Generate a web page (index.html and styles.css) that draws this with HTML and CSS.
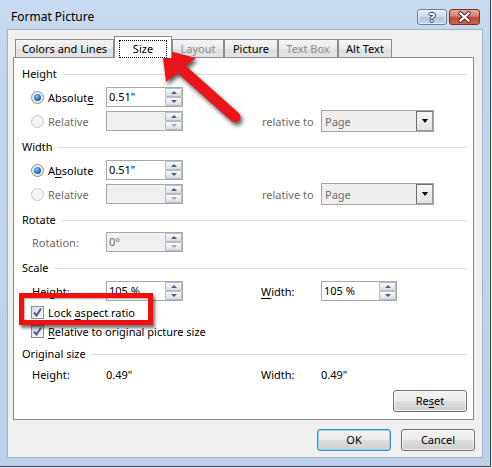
FILE: index.html
```html
<!DOCTYPE html>
<html>
<head>
<meta charset="utf-8">
<link rel="stylesheet" href="styles.css">
</head>
<body>
<div class="window">
  <div class="titlebar">
    <span class="title">Format Picture</span>
    <div class="caption-btns">
      <div class="cbtn help"><span>?</span></div>
      <div class="cbtn close">
        <svg width="31" height="16" viewBox="0 0 31 16"><path d="M11 4 L20 12 M20 4 L11 12" stroke="#3a2a2a" stroke-width="4.4" stroke-linecap="round"/><path d="M11 4 L20 12 M20 4 L11 12" stroke="#fff" stroke-width="2.4" stroke-linecap="round"/></svg>
      </div>
    </div>
  </div>
  <div class="client">
    <div class="tabs">
      <div class="tab w1">Colors and Lines</div>
      <div class="tab sel w2"><span class="focus">Size</span></div>
      <div class="tab dis w3">Layout</div>
      <div class="tab w4">Picture</div>
      <div class="tab dis w5">Text Box</div>
      <div class="tab w6">Alt Text</div>
    </div>
    <div class="panel">
      <div class="hdr first"><span>Height</span><i></i></div>
      <div class="row r1">
        <div class="lab"><span class="radio on"></span><span>Absolut<u>e</u></span></div>
        <div class="inp"><span class="val">0.51"</span><span class="spin"><b class="up"></b><b class="dn"></b></span></div>
      </div>
      <div class="row">
        <div class="lab gray"><span class="radio off"></span><span>Relative</span></div>
        <div class="inp off"><span class="val"></span><span class="spin"><b class="up"></b><b class="dn off"></b></span></div>
        <div class="lab2 gray">relative to</div>
        <div class="sel-box"><span>Page</span><span class="dd"><em></em></span></div>
      </div>

      <div class="hdr"><span>Width</span><i></i></div>
      <div class="row r1">
        <div class="lab"><span class="radio on"></span><span>A<u>b</u>solute</span></div>
        <div class="inp"><span class="val">0.51"</span><span class="spin"><b class="up"></b><b class="dn"></b></span></div>
      </div>
      <div class="row">
        <div class="lab gray"><span class="radio off"></span><span>Relative</span></div>
        <div class="inp off"><span class="val"></span><span class="spin"><b class="up"></b><b class="dn off"></b></span></div>
        <div class="lab2 gray">relative to</div>
        <div class="sel-box"><span>Page</span><span class="dd"><em></em></span></div>
      </div>

      <div class="hdr"><span>Rotate</span><i></i></div>
      <div class="row r2">
        <div class="lab gray txt">Rotation:</div>
        <div class="inp off"><span class="val gray">0°</span><span class="spin"><b class="up"></b><b class="dn off"></b></span></div>
      </div>

      <div class="hdr"><span>Scale</span><i></i></div>
      <div class="row r1">
        <div class="lab txt">Height:</div>
        <div class="inp"><span class="val">105 %</span><span class="spin"><b class="up"></b><b class="dn"></b></span></div>
        <div class="lab2 txt2"><u>W</u>idth:</div>
        <div class="inp w76"><span class="val">105 %</span><span class="spin"><b class="up"></b><b class="dn"></b></span></div>
      </div>
      <div class="crow">
        <span class="chk"><svg width="11" height="11" viewBox="0 0 11 11"><path d="M2 5.5 L4.5 8.5 L9 1.5" fill="none" stroke="#4a5f9c" stroke-width="2"/></svg></span>
        <span>Lock <u>a</u>spect ratio</span>
      </div>
      <div class="crow">
        <span class="chk"><svg width="11" height="11" viewBox="0 0 11 11"><path d="M2 5.5 L4.5 8.5 L9 1.5" fill="none" stroke="#4a5f9c" stroke-width="2"/></svg></span>
        <span><u>R</u>elative to original picture size</span>
      </div>

      <div class="hdr h5"><span>Original size</span><i></i></div>
      <div class="row vrow">
        <div class="lab txt">Height:</div>
        <div class="value">0.49"</div>
        <div class="lab2 txt2">Width:</div>
        <div class="value">0.49"</div>
      </div>
      <div class="reset-row"><button class="btn">Re<u>s</u>et</button></div>
    </div>
    <div class="footer">
      <button class="btn default">OK</button>
      <button class="btn">Cancel</button>
    </div>
  </div>
  <div class="callout"></div>
  <svg class="arrow" width="110" height="100" viewBox="150 40 110 100">
    <g class="arrow-g">
      <line x1="180" y1="68" x2="235" y2="117" stroke="#e8161b" stroke-width="11" stroke-linecap="round"/>
      <polygon points="162,49 166,82 196,58" fill="#e8161b"/>
    </g>
  </svg>
</div>
</body>
</html>
```
FILE: styles.css
```css
* { box-sizing: border-box; }
html, body { margin: 0; padding: 0; }
body {
  width: 492px; height: 468px; overflow: hidden;
  background: #f2f2f2;
  font-family: "Noto Sans", "Open Sans", sans-serif;
  font-size: 11px; color: #000;
}
u { text-decoration: underline; text-underline-offset: 2px; }

.window {
  position: relative;
  width: 491px; height: 467px;
  background: linear-gradient(180deg, #c9dbef 0, #c1d5eb 60px, #bdd2ea 100%);
  border-right: 1px solid #3b4651;
  border-bottom: 1px solid #3b4651;
  padding: 0 7px 0 7px;
}
.titlebar { height: 29px; display: flex; align-items: flex-start; }
.title { margin: 9px 0 0 4px; line-height: 16px; font-size: 12px; }
.caption-btns { margin: 9px 3px 0 auto; display: flex; gap: 2px; }
.cbtn {
  height: 16px; border-radius: 3px;
  display: flex; align-items: center; justify-content: center;
}
.help {
  width: 30px; border: 1px solid #6d7f96;
  background: linear-gradient(180deg, #e4ecf6 0, #cfdcec 50%, #b7c9df 51%, #c6d6ea 100%);
  box-shadow: inset 0 0 0 1px rgba(255,255,255,.5);
}
.help span {
  color: #fff; font-weight: bold; font-size: 13px; line-height: 14px;
  text-shadow: 0 0 1px #2e3f57, 1px 0 0 #2e3f57, -1px 0 0 #2e3f57, 0 1px 0 #2e3f57, 0 -1px 0 #2e3f57;
}
.close {
  width: 31px; border: 1px solid #7a3026;
  background: linear-gradient(180deg, #e9a99d 0, #d7806f 45%, #c34a36 50%, #d0614a 100%);
}
.close svg { display: block; }

.client {
  height: 429px;
  background: #f0f0f0;
  border: 1px solid #9fb2c8;
  display: flex; flex-direction: column;
}
.tabs { height: 27px; display: flex; align-items: flex-end; padding-left: 7px; }
.tab {
  height: 18px; border: 1px solid #898c95; border-bottom: none;
  background: linear-gradient(180deg, #f5f5f5 0, #ebebeb 50%, #dedede 51%, #e3e3e3 100%);
  display: flex; align-items: center; justify-content: center;
  line-height: 14px; white-space: nowrap; padding-top: 1px;
}
.tab.dis { color: #8d8d8d; }
.tab.sel {
  height: 22px; margin-bottom: -1px; background: #fff;
  position: relative; z-index: 1; align-items: flex-start; padding-top: 4px;
}
.focus { outline: 1px dotted #000; padding: 1px 13px 2px; line-height: 13px; }
.w1 { width: 99px; } .w2 { width: 58px; } .w3 { width: 52px; }
.w4 { width: 54px; } .w5 { width: 60px; } .w6 { width: 54px; }

.panel {
  margin: 0 8px 0 5px; height: 363px;
  background: #fff; border: 1px solid #898c95;
  padding: 8px 6px 7px 8px;
  display: flex; flex-direction: column;
}
.hdr { height: 16px; display: flex; align-items: center; margin-top: 6px; line-height: 16px; }
.hdr.first { margin-top: 0; }
.hdr.h5 { margin-top: 5px; }
.hdr i { flex: 1; height: 1px; background: #d5dfe5; margin-left: 5px; }

.row { height: 24px; display: flex; align-items: center; padding-left: 9px; }
.row.r1 { margin-top: 3px; }
.row.r2 { margin-top: 2px; }
.row.vrow { height: 20px; margin-top: 2px; }
.gray { color: #6d6d6d; }
.lab { width: 75px; display: flex; align-items: center; }
.lab.txt { padding-left: 1px; }
.lab2 { width: 59px; margin-left: 79px; }
.lab2.txt2 { margin-left: 78px; width: 60px; }
.value { width: 77px; }

.radio {
  width: 13px; height: 13px; border-radius: 50%;
  border: 1px solid #8e8f8f; margin-right: 4px; flex: none;
  background: radial-gradient(circle at 50% 40%, #fff 0, #e6e6e6 70%, #d0d0d0 100%);
  display: flex; align-items: center; justify-content: center;
}
.radio.on::after {
  content: ""; width: 7px; height: 7px; border-radius: 50%;
  background: radial-gradient(circle at 40% 35%, #8fd0ff 0, #2a7bd0 45%, #103f7d 100%);
}
.radio.off { border-color: #c8c8c8; background: #f4f4f4; }

.inp {
  width: 77px; height: 20px; border: 1px solid #a8a8a8;
  background: #fff; display: flex; align-items: center;
}
.inp.w76 { width: 76px; }
.inp.off { background: #f0f0f0; }
.val { flex: 1; padding-left: 2px; line-height: 16px; }
.spin { width: 17px; height: 18px; display: flex; flex-direction: column; gap: 0; }
.spin b {
  flex: 1; border: 1px solid #b6bcc6; border-radius: 1px;
  background: linear-gradient(180deg, #fafafa 0, #e9ecf0 50%, #d9dde3 100%);
  display: flex; align-items: center; justify-content: center;
}
.spin b::after { content: ""; width: 0; height: 0; border-left: 3.5px solid transparent; border-right: 3.5px solid transparent; }
.spin b.up::after { border-bottom: 3px solid #4b5e82; }
.spin b.dn::after { border-top: 3px solid #4b5e82; }
.spin b.dn.off::after { border-top-color: #a9a9a9; }

.sel-box {
  width: 113px; height: 22px; border: 1px solid #a5a5a5;
  background: #efefef; color: #6d6d6d;
  display: flex; align-items: center; padding-left: 3px;
}
.sel-box span:first-child { flex: 1; }
.dd {
  width: 17px; height: 20px; border: 1px solid #6f6f6f;
  border-right-color: #9a9a9a; border-bottom-color: #9a9a9a;
  background: linear-gradient(180deg, #f7f7f7 0, #e3e3e3 100%);
  display: flex; align-items: center; justify-content: center;
}
.dd em { width: 0; height: 0; border-left: 3.5px solid transparent; border-right: 3.5px solid transparent; border-top: 4px solid #000; }

.crow { height: 19px; display: flex; align-items: center; padding-left: 9px; }
.chk {
  width: 13px; height: 13px; border: 1px solid #8e8f8f; margin-right: 4px;
  background: linear-gradient(135deg, #dcdcdc 0, #f6f6f6 100%);
  display: flex; align-items: center; justify-content: center;
}
.chk svg { display: block; }

.reset-row { margin-top: 6px; display: flex; justify-content: flex-end; }
.btn {
  width: 74px; height: 22px; padding: 0;
  border: 1px solid #707070; border-radius: 3px;
  background: linear-gradient(180deg, #f2f2f2 0, #ebebeb 50%, #dddddd 51%, #cfcfcf 100%);
  box-shadow: inset 0 0 0 1px rgba(255,255,255,.7);
  font: inherit; color: #000; line-height: 16px;
}
.btn.default {
  border-color: #3c8dc8;
  box-shadow: inset 0 0 0 1px #8fd3f4;
}
.footer { margin-top: 9px; display: flex; justify-content: flex-end; gap: 10px; padding-right: 7px; }

.callout {
  position: absolute; left: 19px; top: 293px; width: 134px; height: 32px;
  border: 5px solid #f01010;
  box-shadow: 2px 3px 3px rgba(0,0,0,.55), inset 1px 1px 2px rgba(0,0,0,.35);
}
.arrow { position: absolute; left: 150px; top: 40px; overflow: visible; }
.arrow-g { filter: drop-shadow(2px 3px 2px rgba(0,0,0,.65)); }
```
